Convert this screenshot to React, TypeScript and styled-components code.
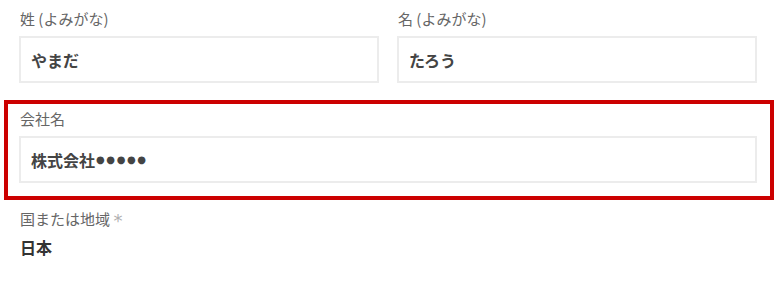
import React from "react";
import styled, { createGlobalStyle } from "styled-components";

const GlobalStyle = createGlobalStyle`
    body {
        margin: 0;
        background: #fff;
        font-family: "Noto Sans CJK JP", "Noto Sans", sans-serif;
        overflow: hidden;
    }
`;

const App = () => {
    return (
        <Form>
            <GlobalStyle />
            <Row>
                <Columns>
                    <Field>
                        <Label>姓 (よみがな)</Label>
                        <Input>やまだ</Input>
                    </Field>
                    <Field>
                        <Label>名 (よみがな)</Label>
                        <Input>たろう</Input>
                    </Field>
                </Columns>
            </Row>
            <Row $highlight>
                <Field>
                    <Label>会社名</Label>
                    <Input>
                        株式会社<Dots>●●●●●</Dots>
                    </Input>
                </Field>
            </Row>
            <Row $last>
                <Field>
                    <Label>
                        国または地域 <Required>*</Required>
                    </Label>
                    <Value>日本</Value>
                </Field>
            </Row>
        </Form>
    );
};

export default App;

const Form = styled.div`
    width: 770px;
    padding: 0 6px 0 4px;
`;

const Row = styled.div<{ $highlight?: boolean; $last?: boolean }>`
    box-sizing: border-box;
    height: ${(p) => (p.$last ? "auto" : "100px")};
    border: 4px solid ${(p) => (p.$highlight ? "#cc0000" : "transparent")};
    padding: 5px 13px 0 11px;
`;

const Columns = styled.div`
    display: grid;
    grid-template-columns: 1fr 1fr;
    gap: 18px;
`;

const Field = styled.div`
    display: flex;
    flex-direction: column;
    gap: 7px;
`;

const Label = styled.div`
    font-size: 15px;
    line-height: 20px;
    color: #666;
    padding-left: 1px;
`;

const Required = styled.span`
    font-family: "DejaVu Sans", sans-serif;
    color: #b0b0b0;
    font-size: 18px;
    line-height: 0;
    vertical-align: -2px;
`;

const Input = styled.div`
    box-sizing: border-box;
    height: 47px;
    display: flex;
    align-items: center;
    padding: 0 10px;
    border: 2px solid #ececec;
    font-size: 16px;
    font-weight: 700;
    color: #444;
`;

const Dots = styled.span`
    font-family: "DejaVu Sans", sans-serif;
    font-size: 10px;
    letter-spacing: 1.6px;
    padding-left: 1px;
`;

const Value = styled.div`
    font-size: 16px;
    line-height: 22px;
    font-weight: 700;
    color: #333;
    padding-left: 1px;
`;
